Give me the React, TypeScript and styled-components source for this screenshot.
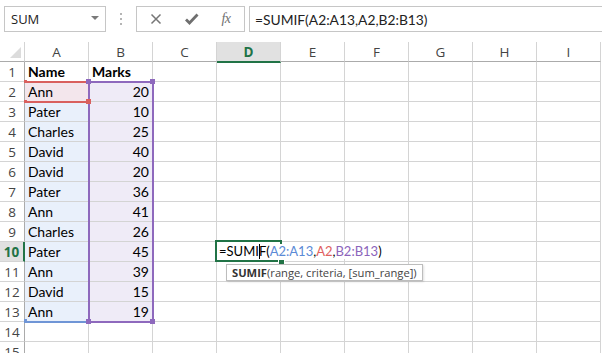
import React from "react";
import styled, { createGlobalStyle } from "styled-components";

const Global = createGlobalStyle`
  html, body { margin: 0; padding: 0; background: #fff; overflow: hidden; }
  #root { width: 602px; height: 353px; overflow: hidden; }
`;

const UI = `"Open Sans", "Liberation Sans", sans-serif`;
const CELL = `Lato, "Liberation Sans", sans-serif`;
const GRID = "#d4d4d4";
const GREEN = "#217346";
const BLUE = "#6f95d6";
const RED = "#d9605e";
const PURPLE = "#8e69bd";

const Page = styled.div`
  width: 602px;
  height: 353px;
  background: #fff;
  display: flex;
  flex-direction: column;
`;

const Toolbar = styled.div`
  display: flex;
  align-items: stretch;
  height: 26px;
  padding: 6px 0 0 4px;
  margin-bottom: 10px;
`;

const NameBox = styled.div`
  box-sizing: border-box;
  width: 102px;
  border: 1px solid #c6c6c6;
  display: flex;
  align-items: center;
  justify-content: space-between;
  padding: 0 6px 0 6px;
  font-family: ${UI};
  font-size: 13px;
  color: #222;
`;

const Caret = styled.span`
  width: 0;
  height: 0;
  border-left: 4px solid transparent;
  border-right: 4px solid transparent;
  border-top: 4px solid #7a7a7a;
  margin-top: -2px;
`;

const Dots = styled.div`
  width: 30px;
  display: flex;
  flex-direction: column;
  align-items: center;
  justify-content: center;
  gap: 3px;
`;

const Dot = styled.span`
  width: 2px;
  height: 2px;
  background: #b5b5b5;
`;

const FxButtons = styled.div`
  box-sizing: border-box;
  width: 109px;
  border: 1px solid #c6c6c6;
  display: flex;
  align-items: center;
  justify-content: space-between;
  padding: 0 6px 0 7px;
`;

const IconBtn = styled.span`
  width: 24px;
  display: flex;
  align-items: center;
  justify-content: center;
  color: #767676;
`;

const FxText = styled.span`
  font-family: "Liberation Serif", serif;
  font-style: italic;
  font-size: 14px;
  color: #707070;
  letter-spacing: -0.5px;
`;

const FormulaInput = styled.div`
  box-sizing: border-box;
  flex: 1;
  margin-left: 4px;
  border: 1px solid #c6c6c6;
  border-right: none;
  display: flex;
  align-items: center;
  padding-left: 5px;
  font-family: ${CELL};
  font-size: 13.8px;
  color: #222;
`;

const SheetWrap = styled.div`
  position: relative;
  flex: 1;
  overflow: hidden;
`;

const Sheet = styled.div`
  display: grid;
  grid-template-columns: 25px repeat(9, 64px);
  grid-auto-rows: 20px;
`;

const ColHead = styled.div<{ $active?: boolean }>`
  box-sizing: border-box;
  border-right: 1px solid ${GRID};
  border-bottom: ${(p) => (p.$active ? `2px solid ${GREEN}` : "1px solid #ababab")};
  background: ${(p) => (p.$active ? "#e1e1e1" : "#fff")};
  color: ${(p) => (p.$active ? GREEN : "#444")};
  font-weight: ${(p) => (p.$active ? 700 : 400)};
  font-family: ${UI};
  font-size: 13.5px;
  display: flex;
  align-items: center;
  justify-content: center;
  margin-bottom: ${(p) => (p.$active ? "-1px" : "0")};
  height: ${(p) => (p.$active ? "21px" : "20px")};
  position: relative;
  z-index: ${(p) => (p.$active ? 1 : 0)};
`;

const Corner = styled.div`
  box-sizing: border-box;
  border-right: 1px solid ${GRID};
  border-bottom: 1px solid #ababab;
  display: flex;
  align-items: flex-end;
  justify-content: flex-end;
  padding: 0 3px 3px 0;
`;

const CornerTri = styled.span`
  width: 0;
  height: 0;
  border-left: 11px solid transparent;
  border-bottom: 11px solid #dcdcdc;
`;

const RowHead = styled.div<{ $active?: boolean }>`
  box-sizing: border-box;
  border-right: ${(p) => (p.$active ? `2px solid ${GREEN}` : `1px solid #ababab`)};
  border-bottom: 1px solid ${GRID};
  background: ${(p) => (p.$active ? "#e1e1e1" : "#fff")};
  color: ${(p) => (p.$active ? GREEN : "#444")};
  font-weight: ${(p) => (p.$active ? 700 : 400)};
  font-family: ${UI};
  font-size: 13.5px;
  display: flex;
  align-items: center;
  justify-content: center;
  padding-top: 1px;
`;

const Cell = styled.div<{ $fill?: string; $num?: boolean; $bold?: boolean }>`
  box-sizing: border-box;
  border-right: 1px solid ${GRID};
  border-bottom: 1px solid ${GRID};
  background: ${(p) => p.$fill || "#fff"};
  font-family: ${CELL};
  font-size: 14px;
  font-weight: ${(p) => (p.$bold ? 700 : 400)};
  color: #000;
  display: flex;
  align-items: flex-end;
  justify-content: ${(p) => (p.$num ? "flex-end" : "flex-start")};
  padding: 0 3px 1px 3px;
  line-height: 17px;
  white-space: nowrap;
  position: relative;
`;

const EditText = styled.span`
  position: relative;
  z-index: 6;
  display: inline-block;
  background: #fff;
  padding-right: 2px;
  margin-left: -1px;
  margin-bottom: 1px;
  font-size: 13px;
  line-height: 15px;
`;

const Ref = styled.span<{ $c: string }>`
  color: ${(p) => p.$c};
`;

const TextCaret = styled.span`
  display: inline-block;
  width: 1px;
  height: 15px;
  margin-right: -1px;
  background: #000;
  vertical-align: -3px;
`;

const RangeBox = styled.div<{ $color: string; $sides: string }>`
  position: absolute;
  box-sizing: border-box;
  pointer-events: none;
  z-index: 3;
  border-style: solid;
  border-color: ${(p) => p.$color};
  border-width: ${(p) => p.$sides};
`;

const Handle = styled.div<{ $color: string; $s?: number }>`
  position: absolute;
  z-index: 4;
  width: ${(p) => p.$s ?? 5}px;
  height: ${(p) => p.$s ?? 5}px;
  background: ${(p) => p.$color};
`;

const ActiveBox = styled.div`
  position: absolute;
  z-index: 3;
  box-sizing: border-box;
  border: 2px solid ${GREEN};
`;

const FillHandle = styled.div`
  position: absolute;
  z-index: 7;
  width: 5px;
  height: 5px;
  background: ${GREEN};
  border: 1px solid #fff;
`;

const Tip = styled.div`
  position: absolute;
  z-index: 7;
  box-sizing: border-box;
  height: 17px;
  padding: 0 5px 0 5px;
  background: #fff;
  border: 1px solid #bdbdbd;
  box-shadow: 1px 1px 2px rgba(0, 0, 0, 0.12);
  font-family: ${UI};
  font-size: 11.2px;
  line-height: 15px;
  color: #444;
  white-space: nowrap;
`;

const TipFn = styled.b`
  font-weight: 700;
  color: #333;
`;

const cols = ["A", "B", "C", "D", "E", "F", "G", "H", "I"];
const data: [string, string][] = [
  ["Name", "Marks"],
  ["Ann", "20"],
  ["Pater", "10"],
  ["Charles", "25"],
  ["David", "40"],
  ["David", "20"],
  ["Pater", "36"],
  ["Ann", "41"],
  ["Charles", "26"],
  ["Pater", "45"],
  ["Ann", "39"],
  ["David", "15"],
  ["Ann", "19"],
  ["", ""],
  ["", ""],
];

const FILL_A = "#e9f0fb";
const FILL_A2 = "#f3e6ec";
const FILL_B = "#efebf7";

// geometry helpers (relative to sheet top)
const colX = (c: number) => 24 + c * 64; // left gridline of column c (A=0)
const rowY = (r: number) => 19 + (r - 1) * 20; // top gridline of row r

export default function App() {
  return (
    <Page>
      <Global />
      <Toolbar>
        <NameBox>
          SUM
          <Caret />
        </NameBox>
        <Dots>
          <Dot />
          <Dot />
          <Dot />
        </Dots>
        <FxButtons>
          <IconBtn>
            <svg width="12" height="12" viewBox="0 0 12 12">
              <path d="M1.5 1.5 L10.5 10.5 M10.5 1.5 L1.5 10.5" stroke="#767676" strokeWidth="1.5" fill="none" />
            </svg>
          </IconBtn>
          <IconBtn>
            <svg width="15" height="12" viewBox="0 0 15 12">
              <path d="M2 6.5 L5.5 10 L13.5 1.5" stroke="#6f6f6f" strokeWidth="2.8" fill="none" />
            </svg>
          </IconBtn>
          <IconBtn>
            <FxText>fx</FxText>
          </IconBtn>
        </FxButtons>
        <FormulaInput>=SUMIF(A2:A13,A2,B2:B13)</FormulaInput>
      </Toolbar>

      <SheetWrap>
        <Sheet>
          <Corner>
            <CornerTri />
          </Corner>
          {cols.map((c) => (
            <ColHead key={c} $active={c === "D"}>
              {c}
            </ColHead>
          ))}
          {data.map((row, i) => {
            const r = i + 1;
            const inRange = r >= 2 && r <= 13;
            return (
              <React.Fragment key={r}>
                <RowHead $active={r === 10}>{r}</RowHead>
                <Cell $bold={r === 1} $fill={r === 2 ? FILL_A2 : inRange ? FILL_A : undefined}>
                  {row[0]}
                </Cell>
                <Cell $bold={r === 1} $num={r !== 1} $fill={inRange ? FILL_B : undefined}>
                  {row[1]}
                </Cell>
                <Cell />
                <Cell>
                  {r === 10 && (
                    <EditText>
                      =SUMI
                      <TextCaret />
                      F(<Ref $c="#5b8ad6">A2:A13</Ref>,<Ref $c="#e0605e">A2</Ref>,<Ref $c="#8c64bb">B2:B13</Ref>)
                    </EditText>
                  )}
                </Cell>
                <Cell />
                <Cell />
                <Cell />
                <Cell />
                <Cell />
              </React.Fragment>
            );
          })}
        </Sheet>

        {/* A2:A13 blue range */}
        <RangeBox
          $color={BLUE}
          $sides="0 0 2px 0"
          style={{ left: colX(0), top: rowY(2), width: 66, height: 242 }}
        />
        <Handle $color={BLUE} $s={3} style={{ left: colX(0), top: rowY(14) - 2 }} />
        {/* A2 red range */}
        <RangeBox
          $color={RED}
          $sides="2px 0 2px 0"
          style={{ left: colX(0), top: rowY(2), width: 66, height: 22 }}
        />
        <Handle $color={RED} $s={3} style={{ left: colX(0), top: rowY(2) - 1 }} />
        <Handle $color={RED} $s={3} style={{ left: colX(0), top: rowY(3) - 1 }} />
        <Handle $color={RED} style={{ left: colX(1) - 2, top: rowY(3) - 2 }} />
        {/* B2:B13 purple range */}
        <RangeBox
          $color={PURPLE}
          $sides="2px"
          style={{ left: colX(1), top: rowY(2), width: 66, height: 242 }}
        />
        <Handle $color={PURPLE} style={{ left: colX(1) - 2, top: rowY(2) - 2 }} />
        <Handle $color={PURPLE} style={{ left: colX(2) - 2, top: rowY(2) - 2 }} />
        <Handle $color={PURPLE} style={{ left: colX(1) - 2, top: rowY(14) - 2 }} />
        <Handle $color={PURPLE} style={{ left: colX(2) - 2, top: rowY(14) - 2 }} />

        {/* active cell D10 */}
        <ActiveBox style={{ left: colX(3) - 1, top: rowY(10) - 1, width: 67, height: 22 }} />
        <FillHandle style={{ left: colX(4) - 2, top: rowY(11) - 2 }} />

        <Tip style={{ left: 226, top: 222 }}>
          <TipFn>SUMIF</TipFn>(range, criteria, [sum_range])
        </Tip>
      </SheetWrap>
    </Page>
  );
}
